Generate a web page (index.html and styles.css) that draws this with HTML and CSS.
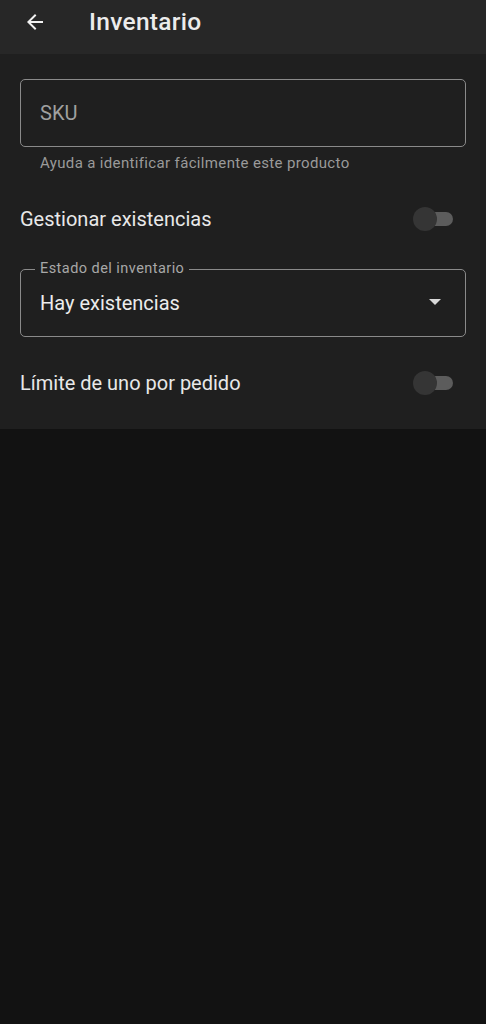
FILE: index.html
```html
<!DOCTYPE html>
<html lang="es">
<head>
    <meta charset="UTF-8">
    <meta name="viewport" content="width=device-width, initial-scale=1.0">
    <title>Inventario</title>
    <link rel="stylesheet" href="styles.css">
</head>
<body>
    <header class="app-bar">
        <button class="back" aria-label="Volver">
            <svg width="24" height="24" viewBox="0 0 24 24"><path d="M20 11H7.83l5.59-5.59L12 4l-8 8 8 8 1.41-1.41L7.83 13H20v-2z" fill="#f2f2f2"/></svg>
        </button>
        <h1 class="title">Inventario</h1>
    </header>

    <section class="panel">
        <div class="field">
            <div class="outline">
                <span class="placeholder">SKU</span>
            </div>
            <div class="helper">Ayuda a identificar fácilmente este producto</div>
        </div>

        <div class="row">
            <span class="row-label">Gestionar existencias</span>
            <span class="switch"><span class="thumb"></span></span>
        </div>

        <div class="field select">
            <div class="outline">
                <span class="float-label">Estado del inventario</span>
                <span class="value">Hay existencias</span>
                <span class="caret"></span>
            </div>
        </div>

        <div class="row">
            <span class="row-label">Límite de uno por pedido</span>
            <span class="switch"><span class="thumb"></span></span>
        </div>
    </section>
</body>
</html>
```

FILE: styles.css
```css
body {
    margin: 0;
    background: #121212;
    font-family: Roboto, "Noto Sans", sans-serif;
    color: #e6e6e6;
}
.app-bar {
    height: 54px;
    background: #272727;
    display: flex;
    align-items: center;
    box-sizing: border-box;
    padding-bottom: 11px;
}
.back {
    background: none;
    border: 0;
    padding: 0;
    margin-left: 23px;
    width: 24px;
    height: 24px;
    display: flex;
}
.title {
    margin: 0 0 0 42px;
    font-size: 24.5px;
    font-weight: 500;
    color: #ececec;
    letter-spacing: 0.3px;
}
.panel {
    background: #1f1f1f;
    padding: 25px 20px 0;
    height: 350px;
}
.outline {
    position: relative;
    height: 68px;
    border: 1.5px solid #8a8a8a;
    border-radius: 5px;
    box-sizing: border-box;
    display: flex;
    align-items: center;
    padding: 0 20px 0 19px;
}
.placeholder {
    font-size: 20px;
    color: #a0a0a0;
}
.helper {
    font-size: 15px;
    color: #9a9a9a;
    padding: 7px 0 0 20px;
    letter-spacing: 0.35px;
}
.row {
    display: flex;
    align-items: center;
    justify-content: space-between;
    height: 54px;
    margin-top: 20px;
}
.row-label {
    font-size: 20px;
    color: #e8e8e8;
}
.switch {
    position: relative;
    width: 34px;
    height: 14px;
    border-radius: 7px;
    background: #5c5c5c;
    margin-right: 13px;
}
.switch .thumb {
    position: absolute;
    left: -6px;
    top: -5px;
    width: 24px;
    height: 24px;
    border-radius: 50%;
    background: #353535;
}
.select {
    margin-top: 23px;
}
.float-label {
    position: absolute;
    left: 14px;
    top: -10px;
    padding: 0 5px;
    background: #1f1f1f;
    font-size: 14.5px;
    color: #a8a8a8;
    letter-spacing: 0.45px;
}
.value {
    font-size: 20px;
    color: #ececec;
    flex: 1;
}
.caret {
    width: 0;
    height: 0;
    border-left: 6px solid transparent;
    border-right: 6px solid transparent;
    border-top: 6px solid #d8d8d8;
    margin-right: 4px;
    margin-top: -2px;
}
.select + .row {
    margin-top: 19px;
}
```
